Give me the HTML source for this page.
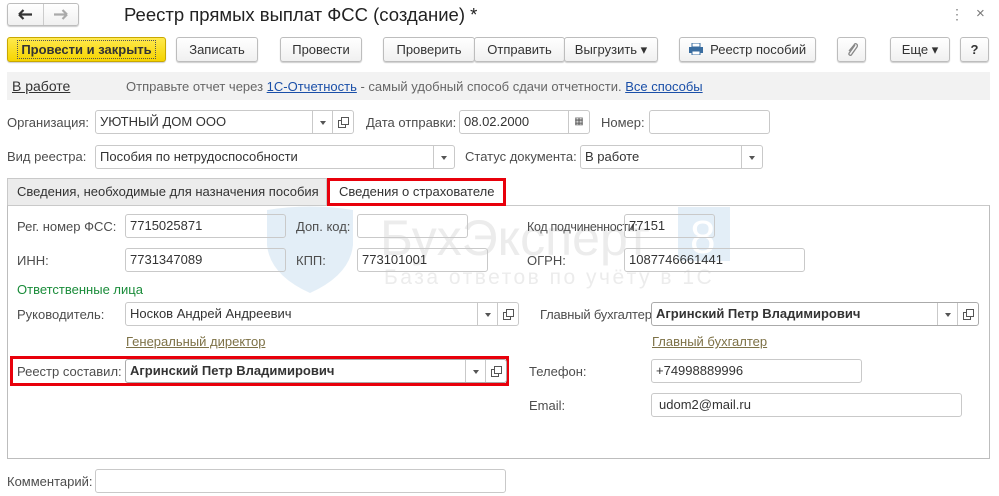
<!DOCTYPE html>
<html><head><meta charset="utf-8"><style>
*{box-sizing:border-box;margin:0;padding:0}
body{width:999px;height:496px;background:#fff;font-family:"Liberation Sans",Arial,sans-serif;font-size:13px;color:#4d4d4d;position:relative;overflow:hidden}
.a{position:absolute;white-space:nowrap}
.btn{position:absolute;height:25px;border:1px solid #bdbdbd;border-radius:3px;background:linear-gradient(#fff,#f0f0f0);box-shadow:0 1px 1px #ccc;color:#333;text-align:center;line-height:23px}
.inp{position:absolute;height:24px;border:1px solid #c9c9c9;border-radius:3px;background:#fff;color:#333;line-height:22px;padding-left:4px}
.lbl{position:absolute;white-space:nowrap;line-height:16px}
.dd{position:absolute;top:0;bottom:0;border-left:1px solid #c9c9c9;width:21px}
.dd:after{content:"";position:absolute;left:7px;top:10px;border:3px solid transparent;border-top:4px solid #555}
.op{position:absolute;top:0;bottom:0;border-left:1px solid #c9c9c9;width:21px}
.op:before{content:"";position:absolute;left:5px;top:9px;width:6px;height:6px;border:1px solid #555;background:#fff}
.op:after{content:"";position:absolute;left:8px;top:6px;width:6px;height:6px;border:1px solid #555;background:#fff}
a{color:#1a4fa8;text-decoration:underline}
.ol{color:#7d7146;text-decoration:underline}
</style></head><body>
<svg class="a" style="left:265px;top:205px" width="470" height="90">
<path d="M2 5 Q45 -2 88 5 L88 40 Q85 70 45 88 Q5 70 2 40Z" fill="#e3eef7"/>
<text x="115" y="50" font-family="Liberation Sans" font-size="50" fill="#ececec">БухЭксперт</text>
<rect x="413" y="2" width="52" height="54" fill="#e3eef7"/>
<text x="425" y="48" font-family="Liberation Sans" font-size="46" fill="#fff">8</text>
<text x="119" y="79" font-family="Liberation Sans" font-size="21" letter-spacing="2.5" fill="#ececec">База ответов по учёту в 1С</text>
</svg>

<div class="btn" style="left:7px;top:3px;width:72px;height:23px"></div>
<div class="a" style="left:43px;top:4px;width:1px;height:21px;background:#ccc"></div>
<svg class="a" style="left:18px;top:9px" width="15" height="11"><path d="M1 5.5H14M1 5.5L5.5 1M1 5.5L5.5 10" stroke="#333" stroke-width="2.2" fill="none"/></svg>
<svg class="a" style="left:53px;top:9px" width="15" height="11"><path d="M14 5.5H1M14 5.5L9.5 1M14 5.5L9.5 10" stroke="#aaa" stroke-width="2.2" fill="none"/></svg>
<div class="a" style="left:124px;top:4px;font-size:18.5px;color:#222;line-height:22px">Реестр прямых выплат ФСС (создание) *</div>
<div class="a" style="left:950px;top:6px;color:#888;font-size:14px">⋮</div>
<div class="a" style="left:976px;top:5px;color:#777;font-size:15px">×</div>

<div class="btn" style="left:7px;top:37px;width:159px;background:linear-gradient(#ffe94d,#f5d400);border-color:#c9a800;font-weight:bold;color:#333"><span style="border:1px dotted #555;padding:1px 3px">Провести и закрыть</span></div>
<div class="btn" style="left:176px;top:37px;width:82px">Записать</div>
<div class="btn" style="left:280px;top:37px;width:82px">Провести</div>
<div class="btn" style="left:383px;top:37px;width:92px">Проверить</div>
<div class="btn" style="left:474px;top:37px;width:91px">Отправить</div>
<div class="btn" style="left:564px;top:37px;width:94px">Выгрузить ▾</div>
<div class="btn" style="left:679px;top:37px;width:137px"><svg width="14" height="12" style="vertical-align:-1px"><rect x="3" y="0" width="8" height="4" fill="#fff" stroke="#3a6da0"/><rect x="0" y="4" width="14" height="6" fill="#3a6da0"/><rect x="3" y="8" width="8" height="4" fill="#fff" stroke="#3a6da0"/></svg>&nbsp; Реестр пособий</div>
<div class="btn" style="left:837px;top:37px;width:29px"><svg width="12" height="14" style="vertical-align:-2px"><path d="M9 3L4 10Q2 12 3.5 13Q5 14 6 12L11 5Q12 3 10.5 2Q9 1 8 3L3 9" stroke="#888" stroke-width="1.3" fill="none"/></svg></div>
<div class="btn" style="left:890px;top:37px;width:60px">Еще ▾</div>
<div class="btn" style="left:960px;top:37px;width:29px;font-weight:bold">?</div>

<div class="a" style="left:7px;top:72px;width:983px;height:28px;background:#f2f2f2"></div>
<div class="a" style="left:12px;top:78px;font-size:14px;color:#333;text-decoration:underline">В работе</div>
<div class="a" style="left:126px;top:79px;color:#666">Отправьте отчет через <a>1С-Отчетность</a> - самый удобный способ сдачи отчетности. <a>Все способы</a></div>

<div class="lbl" style="left:7px;top:115px">Организация:</div>
<div class="inp" style="left:95px;top:110px;width:259px">УЮТНЫЙ ДОМ ООО<div class="dd" style="right:20px"></div><div class="op" style="right:0"></div></div>
<div class="lbl" style="left:366px;top:115px">Дата отправки:</div>
<div class="inp" style="left:459px;top:110px;width:131px">08.02.2000<div class="a" style="right:0;top:0;bottom:0;width:21px;border-left:1px solid #c9c9c9;text-align:center;font-size:10px;color:#555">▦</div></div>
<div class="lbl" style="left:601px;top:115px">Номер:</div>
<div class="inp" style="left:649px;top:110px;width:121px"></div>

<div class="lbl" style="left:7px;top:149px">Вид реестра:</div>
<div class="inp" style="left:95px;top:145px;width:360px">Пособия по нетрудоспособности<div class="dd" style="right:0"></div></div>
<div class="lbl" style="left:465px;top:149px">Статус документа:</div>
<div class="inp" style="left:580px;top:145px;width:183px">В работе<div class="dd" style="right:0"></div></div>

<div class="a" style="left:7px;top:178px;width:320px;height:28px;background:#ececec;border:1px solid #c9c9c9;border-bottom:none;line-height:26px;padding-left:9px;color:#333">Сведения, необходимые для назначения пособия</div>
<div class="a" style="left:7px;top:205px;width:983px;height:254px;border:1px solid #bdbdbd;border-top-color:#c9c9c9"></div>
<div class="a" style="left:327px;top:178px;width:179px;height:28px;background:#fff;border:3px solid #e8000b;line-height:22px;padding-left:9px;color:#333">Сведения о страхователе</div>

<div class="lbl" style="left:17px;top:219px">Рег. номер ФСС:</div>
<div class="inp" style="left:125px;top:214px;width:161px;background:transparent">7715025871</div>
<div class="lbl" style="left:296px;top:219px">Доп. код:</div>
<div class="inp" style="left:357px;top:214px;width:111px;background:transparent"></div>
<div class="lbl" style="left:527px;top:219px;font-size:12.5px;letter-spacing:-0.3px">Код подчиненности:</div>
<div class="inp" style="left:624px;top:214px;width:91px;background:transparent">77151</div>

<div class="lbl" style="left:17px;top:253px">ИНН:</div>
<div class="inp" style="left:125px;top:248px;width:161px;background:transparent">7731347089</div>
<div class="lbl" style="left:296px;top:253px">КПП:</div>
<div class="inp" style="left:357px;top:248px;width:131px;background:transparent">773101001</div>
<div class="lbl" style="left:527px;top:253px">ОГРН:</div>
<div class="inp" style="left:624px;top:248px;width:181px;background:transparent">1087746661441</div>

<div class="lbl" style="left:17px;top:282px;color:#1a8c3a">Ответственные лица</div>

<div class="lbl" style="left:17px;top:307px">Руководитель:</div>
<div class="inp" style="left:125px;top:302px;width:394px">Носков Андрей Андреевич<div class="dd" style="right:20px"></div><div class="op" style="right:0"></div></div>
<div class="lbl" style="left:540px;top:307px;letter-spacing:-0.2px">Главный бухгалтер:</div>
<div class="inp" style="left:651px;top:302px;width:328px;font-weight:bold;border-color:#aaa">Агринский Петр Владимирович<div class="dd" style="right:20px"></div><div class="op" style="right:0"></div></div>

<div class="lbl ol" style="left:126px;top:334px">Генеральный директор</div>
<div class="lbl ol" style="left:652px;top:334px">Главный бухгалтер</div>

<div class="a" style="left:10px;top:356px;width:499px;height:30px;border:3px solid #e8000b"></div>
<div class="lbl" style="left:17px;top:364px">Реестр составил:</div>
<div class="inp" style="left:125px;top:359px;width:382px;font-weight:bold;border-color:#aaa">Агринский Петр Владимирович<div class="dd" style="right:20px"></div><div class="op" style="right:0"></div></div>

<div class="lbl" style="left:529px;top:364px">Телефон:</div>
<div class="inp" style="left:651px;top:359px;width:211px">+74998889996</div>
<div class="lbl" style="left:529px;top:398px">Email:</div>
<div class="inp" style="left:651px;top:393px;width:311px;padding-left:7px">udom2@mail.ru</div>

<div class="lbl" style="left:7px;top:474px">Комментарий:</div>
<div class="inp" style="left:95px;top:469px;width:411px"></div>
</body></html>
